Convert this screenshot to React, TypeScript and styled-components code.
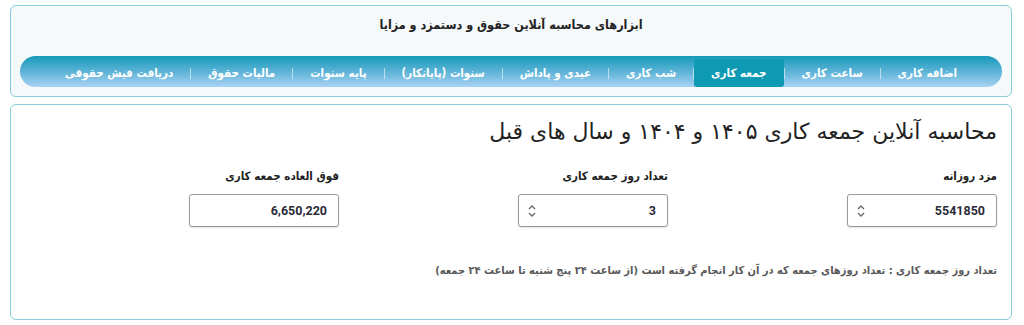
import React from "react";
import styled, { createGlobalStyle } from "styled-components";

const GlobalStyle = createGlobalStyle`
  html, body {
    margin: 0;
    padding: 0;
    background: #ffffff;
  }
  body {
    direction: rtl;
    font-family: "DejaVu Sans", "Noto Sans", sans-serif;
    color: #222;
  }
`;

const condensed = `"DejaVu Sans Condensed", "DejaVu Sans", sans-serif`;

const tabs = [
  "اضافه کاری",
  "ساعت کاری",
  "جمعه کاری",
  "شب کاری",
  "عیدی و پاداش",
  "سنوات (پایانکار)",
  "پایه سنوات",
  "مالیات حقوق",
  "دریافت فیش حقوقی",
];

const fields = [
  { label: "مزد روزانه", value: "5541850", spinner: true },
  { label: "تعداد روز جمعه کاری", value: "3", spinner: true },
  { label: "فوق العاده جمعه کاری", value: "6,650,220", spinner: false },
];

const Page = styled.div`
  display: flex;
  flex-direction: column;
  gap: 7px;
  padding: 5px 12px 4px 10px;
`;

const ToolsCard = styled.section`
  height: 92px;
  box-sizing: border-box;
  border: 1.5px solid #86cfdb;
  border-radius: 6px;
  background: #f5f9fa;
  padding: 9px 9px 0;
  display: flex;
  flex-direction: column;
  align-items: stretch;
`;

const ToolsTitle = styled.h2`
  margin: 0;
  text-align: center;
  font-family: ${condensed};
  font-stretch: condensed;
  font-size: 12.5px;
  font-weight: bold;
  color: #222;
  height: 20px;
  line-height: 20px;
`;

const NavBar = styled.nav`
  margin-top: 21px;
  height: 31px;
  border-radius: 16px;
  background: linear-gradient(to bottom, #169ab9 0%, #5cb3d6 50%, #a9d3f3 100%);
  display: flex;
  align-items: center;
  justify-content: center;
`;

const Tab = styled.div<{ $active?: boolean }>`
  display: flex;
  align-items: center;
  height: 28px;
  margin-top: 2px;
  padding: 0 17px;
  border-radius: 3px;
  font-family: ${condensed};
  font-stretch: condensed;
  font-size: 11.5px;
  font-weight: bold;
  color: #ffffff;
  white-space: nowrap;
  background: ${({ $active }) => ($active ? "#0f9ab4" : "transparent")};
`;

const Separator = styled.span`
  width: 1px;
  height: 11px;
  margin-top: 4px;
  background: rgba(255, 255, 255, 0.55);
`;

const CalcCard = styled.section`
  height: 216px;
  box-sizing: border-box;
  border: 1.5px solid #86cfdb;
  border-radius: 6px;
  background: #ffffff;
  padding: 11px 14px 0;
`;

const Heading = styled.h1`
  margin: 0;
  font-size: 22px;
  font-weight: normal;
  color: #222;
  line-height: 32px;
`;

const FieldRow = styled.div`
  display: grid;
  grid-template-columns: repeat(3, 329px);
  margin-top: 19px;
`;

const Field = styled.div`
  display: flex;
  flex-direction: column;
  align-items: flex-start;
`;

const Label = styled.label`
  font-family: ${condensed};
  font-stretch: condensed;
  font-size: 11.5px;
  font-weight: bold;
  color: #222;
  height: 18px;
  line-height: 18px;
`;

const InputBox = styled.div`
  margin-top: 9px;
  width: 150px;
  height: 33px;
  box-sizing: border-box;
  border: 1px solid #9a9a9a;
  border-radius: 3px;
  box-shadow: 0 1px 2px rgba(0, 0, 0, 0.12);
  display: flex;
  align-items: center;
  padding: 0 11px 0 8px;
  background: #fff;
`;

const ValueInput = styled.input`
  flex: 1;
  min-width: 0;
  border: none;
  outline: none;
  background: transparent;
  direction: rtl;
  text-align: right;
  font-family: Roboto, "Liberation Sans", sans-serif;
  font-size: 12.5px;
  font-weight: bold;
  color: #2b2b3a;
  padding: 0;
`;

const Note = styled.p`
  margin: 37px 0 0;
  font-family: ${condensed};
  font-stretch: condensed;
  font-size: 11px;
  font-weight: bold;
  color: #595959;
`;

const Spinner = () => (
  <svg width="10" height="14" viewBox="0 0 10 14" fill="none" stroke="#666" strokeWidth="1.3">
    <path d="M2 5 L5 2 L8 5" />
    <path d="M2 9 L5 12 L8 9" />
  </svg>
);

export default function App() {
  return (
    <>
      <GlobalStyle />
      <Page>
        <ToolsCard>
          <ToolsTitle>ابزارهای محاسبه آنلاین حقوق و دستمزد و مزایا</ToolsTitle>
          <NavBar>
            {tabs.map((t, i) => (
              <React.Fragment key={t}>
                {i > 0 && <Separator />}
                <Tab $active={t === "جمعه کاری"}>{t}</Tab>
              </React.Fragment>
            ))}
          </NavBar>
        </ToolsCard>
        <CalcCard>
          <Heading>محاسبه آنلاین جمعه کاری ۱۴۰۵ و ۱۴۰۴ و سال های قبل</Heading>
          <FieldRow>
            {fields.map((f) => (
              <Field key={f.label}>
                <Label>{f.label}</Label>
                <InputBox>
                  <ValueInput defaultValue={f.value} readOnly />
                  {f.spinner && <Spinner />}
                </InputBox>
              </Field>
            ))}
          </FieldRow>
          <Note>
            تعداد روز جمعه کاری : تعداد روزهای جمعه که در آن کار انجام گرفته است (از ساعت ۲۴ پنج شنبه تا ساعت ۲۴ جمعه)
          </Note>
        </CalcCard>
      </Page>
    </>
  );
}
